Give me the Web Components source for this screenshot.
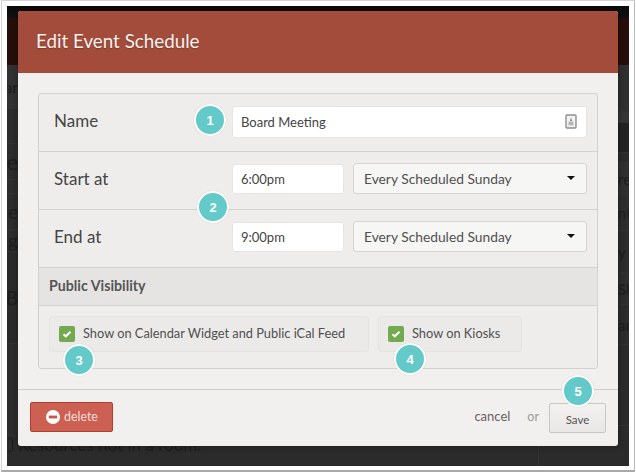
<!DOCTYPE html>
<html>
<head>
<meta charset="utf-8">
<title>Edit Event Schedule</title>
<style>
  html, body { margin: 0; padding: 0; background: #fff; }
  body { width: 636px; height: 474px; overflow: hidden; font-family: Lato, "Liberation Sans", sans-serif; }
</style>
</head>
<body>
<shot-frame>
  <event-modal heading="Edit Event Schedule">
    <schedule-row label="Name">
      <text-field grow value="Board Meeting" icon></text-field>
    </schedule-row>
    <schedule-row label="Start at">
      <text-field value="6:00pm"></text-field>
      <select-box value="Every Scheduled Sunday"></select-box>
    </schedule-row>
    <schedule-row label="End at">
      <text-field value="9:00pm"></text-field>
      <select-box value="Every Scheduled Sunday"></select-box>
    </schedule-row>
    <section-head slot="after">Public Visibility</section-head>
    <check-group slot="after">
      <check-chip style="width:320px">Show on Calendar Widget and Public iCal Feed</check-chip>
      <check-chip style="width:144px">Show on Kiosks</check-chip>
    </check-group>
  </event-modal>
  <call-out n="1" style="left:187px;top:98px"></call-out>
  <call-out n="2" style="left:190px;top:185px"></call-out>
  <call-out n="3" style="left:56px;top:338px"></call-out>
  <call-out n="4" style="left:387px;top:337px"></call-out>
  <call-out n="5" style="left:555px;top:369px"></call-out>
</shot-frame>

<script>
function shadow(el, html) {
    el.attachShadow({mode: 'open'}).innerHTML = html;
}

class ShotFrame extends HTMLElement {
    constructor() {
        super();
        const left = [[44, '#323232', 'ar', 16], [35, '#2c2c2c', '', 16], [36, '#2c2c2c', 'e', 22], [14, '#2c2c2c', '', 16],
            [36, '#2c2c2c', 'ne', 19], [22, '#2c2c2c', 'eg', 19], [92, '#2a2a2a', 'B', 19], [92, '#2c2c2c', '', 16]];
        const right = [[47, '#2f2f2f', '', 14], [11, '#353535', '', 14], [30, '#232323', '', 14], [10, '#2b2b2b', '', 14],
            [32, '#303030', 're', 15], [36, '#2d2d2d', 'nt', 15], [42, '#2c2c2c', 'y C', 15], [32, '#2e2e2e', 'Sh', 15],
            [40, '#2c2c2c', 'ary', 15], [81, '#2b2b2b', '', 14]];
        const rows = (list, cls) => list.map(([h, bg, t, fs]) =>
            `<div class="gutter-row ${cls}" style="height:${h}px;background:${bg};font-size:${fs}px">${t}</div>`).join('');
        shadow(this, `
          <style>
            :host { display: block; box-sizing: border-box; width: 634px; height: 472px; margin-left: 1px;
              padding: 5px; background: #fff; border: 1px solid #d4d4d4; border-bottom: 2px solid #a8a8a8; border-right-color: #bbb; }
            .screen { position: relative; width: 622px; height: 460px; background: #2b2b2b; overflow: hidden;
              display: flex; flex-direction: column; }
            .top { height: 12px; background: linear-gradient(#0a0a0a, #101010); flex: none; }
            .brand { height: 47px; background: #260f0a; flex: none; }
            .main { flex: 1; display: flex; justify-content: space-between; }
            .gutter { width: 11px; overflow: hidden; color: #1d1d1d; }
            .gutter-row { display: flex; align-items: center; white-space: nowrap; border-bottom: 1px solid #333; box-sizing: border-box; }
            .gutter-row.l { justify-content: flex-end; }
            .bottom { position: absolute; left: 0; top: 428px; display: flex; align-items: center; gap: 5px; color: #1c1c1c; font-size: 17px; }
            .box { width: 10px; height: 12px; margin-left: -6px; border: 1px solid #1c1c1c; border-radius: 2px; }
            .seam { position: absolute; left: 531px; top: 440px; width: 1px; height: 20px; background: #333; }
          </style>
          <div class="screen">
            <div class="top"></div>
            <div class="brand"></div>
            <div class="main">
              <div class="gutter">${rows(left, 'l')}</div>
              <div class="gutter">${rows(right, 'r')}</div>
            </div>
            <div class="bottom"><span class="box"></span><span>Resources not in a room.</span></div>
            <div class="seam"></div>
            <slot></slot>
          </div>
        `);
    }
}

class EventModal extends HTMLElement {
    constructor() {
        super();
        shadow(this, `
          <style>
            :host { display: flex; flex-direction: column; position: absolute; left: 11px; top: 5px; width: 600px; height: 435px;
              background: #f1f0ee; border-radius: 3px; overflow: hidden; box-shadow: 0 0 6px rgba(0,0,0,.35); color: #444; }
            header { box-sizing: border-box; height: 62px; flex: none; background: #a34c3b; color: #f7f2ef; font-size: 18.8px; padding: 0 0 4px 18px;
              display: flex; align-items: center; text-shadow: 0 1px 1px rgba(0,0,0,.25); }
            .content { flex: 1; padding: 20px 20px 0; }
            .panel { box-sizing: border-box; height: 276px; background: #eeedeb; border: 1px solid #d2d1cf; border-radius: 3px; overflow: hidden; }
            footer { height: 56px; flex: none; border-top: 1px solid #cfcecc; display: flex; align-items: center; padding: 0 12px; gap: 0; }
            .del { box-sizing: border-box; width: 83px; height: 30px; margin-top: -3px; background: #cc6053; border: 1px solid #b3402f; border-radius: 2px;
              color: #f6dcd7; font-size: 12.4px; display: flex; align-items: center; gap: 4px; padding-left: 15px; }
            .spacer { flex: 1; }
            .cancel { color: #6d5f5f; font-size: 13px; margin-right: 17px; margin-top: -4px; }
            .or { color: #9a9a98; font-size: 12.5px; margin-right: 10px; margin-top: -4px; }
            .save { box-sizing: border-box; width: 57px; height: 30px; background: linear-gradient(#f3f2f0, #e8e7e5); border: 1px solid #c8c7c5; border-radius: 2px;
              color: #555; font-size: 11.5px; display: flex; align-items: center; justify-content: center; padding-top: 2px; }
          </style>
          <header>${this.getAttribute('heading')}</header>
          <div class="content">
            <div class="panel"><slot></slot><slot name="after"></slot></div>
          </div>
          <footer>
            <div class="del">
              <svg width="14" height="14" viewBox="0 0 14 14"><circle cx="7" cy="7" r="7" fill="#fff"/><rect x="2.8" y="5.6" width="8.4" height="2.8" fill="#c9564a"/></svg>
              <span>delete</span>
            </div>
            <div class="spacer"></div>
            <span class="cancel">cancel</span>
            <span class="or">or</span>
            <div class="save">Save</div>
          </footer>
        `);
    }
}

class ScheduleRow extends HTMLElement {
    constructor() {
        super();
        shadow(this, `
          <style>
            :host { display: flex; box-sizing: border-box; height: 58px; align-items: center; padding-bottom: 4px; border-bottom: 1px solid #d2d1cf; }
            label { flex: none; box-sizing: border-box; width: 193px; padding-left: 15px; font-size: 17px; color: #454545; }
            .controls { flex: 1; display: flex; align-items: center; gap: 9px; padding-right: 10px; }
          </style>
          <label>${this.getAttribute('label')}</label>
          <div class="controls"><slot></slot></div>
        `);
    }
}

class TextField extends HTMLElement {
    constructor() {
        super();
        const icon = this.hasAttribute('icon') ? `
          <svg class="ico" width="12" height="15" viewBox="0 0 12 15">
            <rect x="1" y="1" width="10" height="13" rx="1" fill="#f2f2f2" stroke="#8f8f8f" stroke-width="1.4"/>
            <path d="M6 3.4 7.2 7H4.8Z" fill="#8a8a8a"/>
            <rect x="3.5" y="7.6" width="5" height="3.8" fill="#b5b5b5"/>
          </svg>` : '';
        shadow(this, `
          <style>
            :host { display: flex; box-sizing: border-box; width: 112px; height: 30px; background: #fff; border: 1px solid #e6e5e3;
              border-radius: 3px; align-items: center; padding: 0 9px 0 8px; font-size: 13px; color: #444; }
            :host([grow]) { flex: 1; height: 32px; margin-top: 2px; }
            span { flex: 1; }
          </style>
          <span>${this.getAttribute('value')}</span>${icon}
        `);
    }
}

class SelectBox extends HTMLElement {
    constructor() {
        super();
        shadow(this, `
          <style>
            :host { display: flex; box-sizing: border-box; flex: 1; height: 31px; background: #f6f6f5; border: 1px solid #d4d3d1;
              border-radius: 3px; align-items: center; padding: 0 11px 0 10px; font-size: 13.8px; color: #505050; }
            span { flex: 1; }
            i { width: 0; height: 0; margin-top: -2px; border-left: 4px solid transparent; border-right: 4px solid transparent; border-top: 4px solid #111; }
          </style>
          <span>${this.getAttribute('value')}</span><i></i>
        `);
    }
}

class SectionHead extends HTMLElement {
    constructor() {
        super();
        shadow(this, `
          <style>
            :host { display: flex; box-sizing: border-box; height: 38px; align-items: center; padding: 0 0 3px 10px; background: #e5e4e2;
              border-bottom: 1px solid #d2d1cf; font-size: 14.2px; font-weight: 700; color: #555; }
          </style>
          <slot></slot>
        `);
    }
}

class CheckGroup extends HTMLElement {
    constructor() {
        super();
        shadow(this, `
          <style>:host { display: flex; gap: 9px; padding: 10px 10px 0; }</style>
          <slot></slot>
        `);
    }
}

class CheckChip extends HTMLElement {
    constructor() {
        super();
        shadow(this, `
          <style>
            :host { display: flex; box-sizing: border-box; height: 36px; align-items: center; gap: 8px; padding: 0 0 1px 9px;
              background: #ebeae8; border: 1px solid #e4e3e1; border-radius: 3px; font-size: 12.8px; color: #505050; }
            .tick { flex: none; width: 16px; height: 16px; background: #73aa50; border-radius: 2px; display: flex; align-items: center; justify-content: center; }
            .txt { margin-bottom: 2px; }
          </style>
          <span class="tick">
            <svg width="10" height="8" viewBox="0 0 10 8"><path d="M1.5 4.2 3.8 6.3 8.5 1.7" fill="none" stroke="#fff" stroke-width="2"/></svg>
          </span>
          <span class="txt"><slot></slot></span>
        `);
    }
}

class CallOut extends HTMLElement {
    constructor() {
        super();
        shadow(this, `
          <style>
            :host { position: absolute; box-sizing: border-box; width: 32px; height: 32px; border: 2px solid #fff; border-radius: 50%;
              background: #63c9c9; color: #fff; display: flex; align-items: center; justify-content: center;
              font: 700 13px "Liberation Sans", Arial, sans-serif; box-shadow: 0 0 1px rgba(0,0,0,.2); }
          </style>
          ${this.getAttribute('n')}
        `);
    }
}

customElements.define('shot-frame', ShotFrame);
customElements.define('event-modal', EventModal);
customElements.define('schedule-row', ScheduleRow);
customElements.define('text-field', TextField);
customElements.define('select-box', SelectBox);
customElements.define('section-head', SectionHead);
customElements.define('check-group', CheckGroup);
customElements.define('check-chip', CheckChip);
customElements.define('call-out', CallOut);
</script>
</body>
</html>
